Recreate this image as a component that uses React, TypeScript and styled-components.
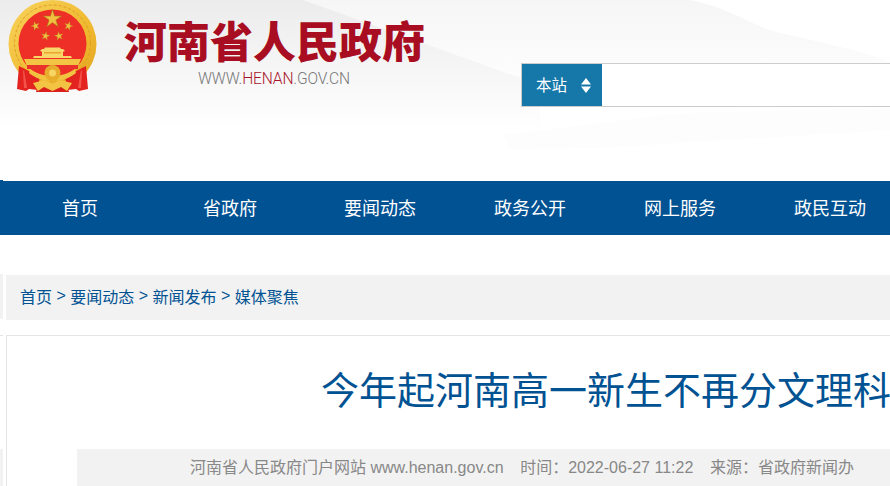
import React from 'react';
import styled, { createGlobalStyle } from 'styled-components';

const GlobalStyle = createGlobalStyle`
  html, body {
    margin: 0;
    padding: 0;
    background: #fff;
    overflow: hidden;
  }
  * {
    box-sizing: border-box;
  }
`;

const Page = styled.div`
  width: 890px;
  height: 486px;
  overflow: hidden;
  font-family: "Liberation Sans", "Noto Sans CJK SC", sans-serif;
`;

const Header = styled.header`
  position: relative;
  height: 181px;
  display: flex;
  align-items: flex-start;
  background: #fff;
`;

const HeaderArt = styled.svg`
  position: absolute;
  inset: 0;
  width: 890px;
  height: 181px;
`;

const Emblem = styled.svg`
  position: relative;
  flex: none;
  width: 90px;
  height: 94px;
  margin-left: 8px;
`;

const Brand = styled.div`
  position: relative;
  flex: none;
  width: 310px;
  margin-left: 26px;
  display: flex;
  flex-direction: column;
`;

const SiteName = styled.h1`
  margin: 9px 0 0;
  font-family: "Noto Sans CJK SC", sans-serif;
  font-size: 43px;
  font-weight: 900;
  line-height: 60px;
  white-space: nowrap;
  color: #a80d22;
`;

const SiteUrl = styled.div`
  margin: 0 0 0 74px;
  font-family: Roboto, sans-serif;
  font-size: 15.6px;
  font-weight: 300;
  line-height: 20px;
  letter-spacing: -0.15px;
  color: #777;
  white-space: nowrap;

  span {
    color: #a8132a;
  }
`;

const SearchBar = styled.div`
  position: relative;
  flex: none;
  width: 372px;
  height: 44px;
  margin: 63px 0 0 87px;
  display: flex;
  background: #fff;
  border: 1px solid #ccc;
`;

const ScopeSelect = styled.div`
  flex: none;
  width: 80px;
  display: flex;
  align-items: center;
  padding: 0 0 2px 14px;
  gap: 14px;
  background: #1677a9;
  color: #fff;
  font-size: 15.5px;

  svg {
    margin-top: 2px;
  }
`;

const SearchInput = styled.input`
  flex: 1;
  min-width: 0;
  border: 0;
  outline: 0;
  background: transparent;
`;

const Nav = styled.nav`
  position: relative;
  height: 54px;
  padding-left: 5px;
  display: flex;
  background: #015293;

  &::before {
    content: '';
    position: absolute;
    left: 0;
    top: -1px;
    width: 3px;
    height: 1px;
    background: #015293;
  }
`;

const NavItem = styled.a`
  flex: none;
  width: 150px;
  text-align: center;
  font-family: "Noto Sans CJK SC", sans-serif;
  font-size: 18px;
  line-height: 52px;
  color: #fff;
`;

const Breadcrumb = styled.div`
  position: relative;
  height: 45px;
  margin: 40px 0 0 6px;
  padding: 0 0 4px 14px;
  display: flex;
  align-items: center;
  gap: 4.45px;
  background: #f2f2f2;
  font-size: 16px;
  color: #015293;
  white-space: nowrap;

  &::before {
    content: '';
    position: absolute;
    left: -6px;
    top: -1px;
    width: 3px;
    height: 45px;
    background: #f2f2f2;
  }
`;

const Article = styled.article`
  position: relative;
  margin: 15px 0 0 6px;
  border: 1px solid #e5e5e5;
  border-right: 0;
  border-bottom: 0;
  height: 151px;

  &::before {
    content: '';
    position: absolute;
    left: -7px;
    top: -1px;
    width: 3px;
    height: 1px;
    background: #e5e5e5;
  }

  &::after {
    content: '';
    position: absolute;
    left: -7px;
    top: 113px;
    width: 3px;
    height: 37px;
    background: #f2f2f2;
  }
`;

const Title = styled.h2`
  margin: 0;
  padding: 27px 0 0 314px;
  height: 113px;
  font-family: "Noto Sans CJK SC", sans-serif;
  font-size: 38px;
  font-weight: 400;
  line-height: 50px;
  white-space: nowrap;
  color: #015293;
`;

const MetaBar = styled.div`
  height: 37px;
  margin-left: 70px;
  padding: 0 0 4px 113px;
  display: flex;
  align-items: center;
  gap: 16.6px;
  background: #f2f2f2;
  font-size: 16px;
  color: #888;
  white-space: nowrap;
`;

const navItems = ['首页', '省政府', '要闻动态', '政务公开', '网上服务', '政民互动'];
const crumbs = ['首页', '要闻动态', '新闻发布', '媒体聚焦'];

// five pointed star centred on cx, cy
const starPoints = (cx: number, cy: number, r: number, turn = 0) => {
  const pts: string[] = [];
  for (let i = 0; i < 10; i++) {
    const rad = i % 2 === 0 ? r : r * 0.38;
    const a = -Math.PI / 2 + turn + (i * Math.PI) / 5;
    pts.push(`${(cx + rad * Math.cos(a)).toFixed(1)},${(cy + rad * Math.sin(a)).toFixed(1)}`);
  }
  return pts.join(' ');
};

const NationalEmblem = () => (
  <Emblem viewBox="0 0 90 94">
    <defs>
      <linearGradient id="ring" x1="0" y1="0" x2="1" y2="1">
        <stop offset="0" stopColor="#f8d45e" />
        <stop offset="0.6" stopColor="#f0b92f" />
        <stop offset="1" stopColor="#e2a322" />
      </linearGradient>
    </defs>
    <circle cx="44.5" cy="44" r="44" fill="url(#ring)" />
    <circle cx="44.5" cy="43" r="38" fill="none" stroke="#dd9f20" strokeWidth="1" strokeDasharray="3 2" />
    <circle cx="44.5" cy="43.5" r="34" fill="#ee2f27" />
    <polygon points={starPoints(44.5, 19, 9.5)} fill="#f2c040" stroke="#a8761a" strokeWidth="0.6" />
    <polygon points={starPoints(27.5, 26, 4.6, -0.3)} fill="#f2c040" stroke="#a8761a" strokeWidth="0.3" />
    <polygon points={starPoints(60.5, 26, 4.6, 0.3)} fill="#f2c040" stroke="#a8761a" strokeWidth="0.3" />
    <polygon points={starPoints(37.5, 36, 4.6, 0.2)} fill="#f2c040" stroke="#a8761a" strokeWidth="0.3" />
    <polygon points={starPoints(51, 36, 4.6, -0.2)} fill="#f2c040" stroke="#a8761a" strokeWidth="0.3" />
    {/* tiananmen */}
    <path d="M32 51l2-2h2l1-1.5h15l1 1.5h2l2 2-2 .8v5H34v-5z" fill="#f8d86a" />
    <path d="M36 52h17v1.5H36z" fill="#e8a62c" />
    <path d="M26 56h37l1 2H25z" fill="#f8d668" />
    <path d="M16 59h57l-2.5 6h-52z" fill="#f3c344" />
    <path d="M19 65h51v4H19z" fill="#e9302a" />
    {/* ribbons */}
    <path d="M11 66l12 6 9 3-2 15-9-1-3 2-9-2z" fill="#e2231f" />
    <path d="M78 66l-12 6-9 3 2 15 9-1 3 2 9-2z" fill="#e2231f" />
    <path d="M16 70l3 18h-3l-1-17zM73 70l-3 18h3l1-17z" fill="#f4534a" />
    <path d="M30 84h29l2 8H28z" fill="#d91e1c" />
    {/* cog wheel and wheat */}
    <path d="M22 69c6 4 13 7 22.500 7s16.500-3 22.500-7l1 4c-6 5-14 8-23.500 8s-17.500-3-23.500-8z" fill="#f2c340" />
    <circle cx="44.500" cy="73" r="8" fill="#e8ac2c" />
    <circle cx="44.500" cy="73" r="3.500" fill="#f6d563" />
    <path d="M25 83l12-3 7.500 4 7.500-4 12 3-5 8-6-4-8.500 4-8.500-4-6 4z" fill="#f3c344" />
  </Emblem>
);

const App: React.FC = () => (
  <Page>
    <GlobalStyle />
    <Header>
      <HeaderArt viewBox="0 0 890 181">
        <defs>
          <linearGradient id="fadeA" x1="0" y1="0" x2="0" y2="1">
            <stop offset="0" stopColor="#ececec" />
            <stop offset="0.55" stopColor="#f6f6f6" />
            <stop offset="1" stopColor="#ffffff" />
          </linearGradient>
          <linearGradient id="fadeB" x1="0" y1="0" x2="0" y2="1">
            <stop offset="0" stopColor="#f6f6f6" />
            <stop offset="1" stopColor="#ffffff" />
          </linearGradient>
        </defs>
        <path d="M0 0H690C730 8 750 25 780 33C820 42 860 50 890 62V100H0Z" fill="url(#fadeB)" />
        <path d="M0 0H303L420 42L540 85V130H0Z" fill="url(#fadeA)" />
        <path d="M503 135L680 113L890 108V130L600 148L510 149Z" fill="#fdfdfd" />
      </HeaderArt>
      <NationalEmblem />
      <Brand>
        <SiteName>河南省人民政府</SiteName>
        <SiteUrl>
          WWW.<span>HENAN</span>.GOV.CN
        </SiteUrl>
      </Brand>
      <SearchBar>
        <ScopeSelect>
          本站
          <svg width="10" height="15" viewBox="0 0 10 15">
            <path d="M5 0l5 6.500H0zM5 15L0 8.500h10z" fill="#fff" />
          </svg>
        </ScopeSelect>
        <SearchInput />
      </SearchBar>
    </Header>
    <Nav>
      {navItems.map((item) => (
        <NavItem key={item}>{item}</NavItem>
      ))}
    </Nav>
    <Breadcrumb>
      {crumbs.map((crumb, i) => (
        <React.Fragment key={crumb}>
          {i > 0 && <span>&gt;</span>}
          <span>{crumb}</span>
        </React.Fragment>
      ))}
    </Breadcrumb>
    <Article>
      <Title>今年起河南高一新生不再分文理科</Title>
      <MetaBar>
        <span>河南省人民政府门户网站 www.henan.gov.cn</span>
        <span>时间：2022-06-27 11:22</span>
        <span>来源：省政府新闻办</span>
      </MetaBar>
    </Article>
  </Page>
);

export default App;
